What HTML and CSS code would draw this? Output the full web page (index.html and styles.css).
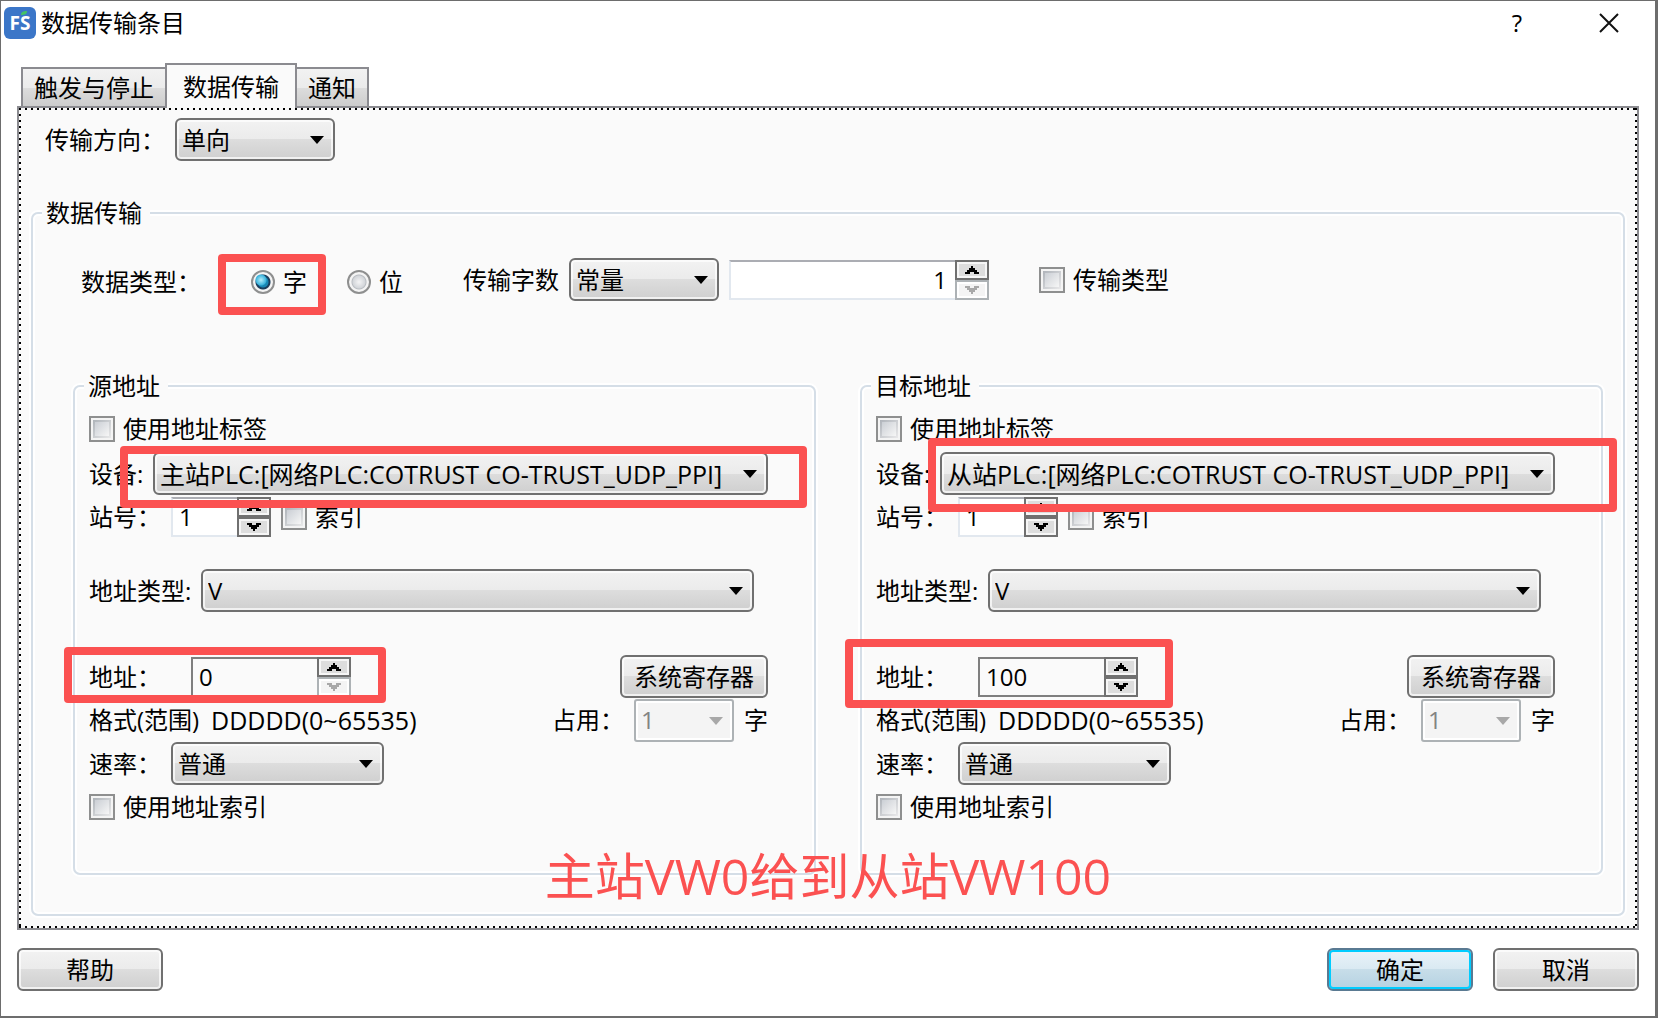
FILE: index.html
```html
<!DOCTYPE html>
<html lang="zh-CN">
<head>
<meta charset="utf-8">
<title>数据传输条目</title>
<link rel="stylesheet" href="styles.css">
</head>
<body>
<svg class="symbols" aria-hidden="true">
  <symbol id="up" viewBox="0 0 14 8"><path d="M6 0h2v2h2v2h2v2h2v2H9V6H5v2H0V6h2V4h2V2h2z"/></symbol>
  <symbol id="down" viewBox="0 0 14 8"><path d="M0 0h5v2h4V0h5v2h-2v2h-2v2H8v2H6V6H4V4H2V2H0z"/></symbol>
</svg>
<div class="window">
  <header class="titlebar">
    <svg class="logo" viewBox="0 0 32 32" aria-hidden="true">
      <rect width="32" height="32" rx="6" fill="#3b76c8"/>
      <text class="logo-text" x="16" y="23" text-anchor="middle">FS</text>
      <path d="M17 8c0-3 2-4 6-4 0 3-2 4-6 4z" fill="#45c463"/>
    </svg>
    <h1 class="title">数据传输条目</h1>
    <button class="caption-button" type="button" aria-label="帮助提示">?</button>
    <button class="caption-button" type="button" aria-label="关闭">
      <svg width="20" height="20" viewBox="0 0 20 20"><path d="M1 1l18 18M19 1L1 19" stroke="#111" stroke-width="2"/></svg>
    </button>
  </header>

  <main class="content">
    <div class="tabs" role="tablist">
      <button class="tab" role="tab" type="button">触发与停止</button>
      <button class="tab tab-active" role="tab" type="button" aria-selected="true">数据传输</button>
      <button class="tab" role="tab" type="button">通知</button>
    </div>

    <form class="panel" id="transfer">
      <div class="direction">
        <label class="direction-label" for="direction">传输方向：</label>
        <span class="combo combo-direction"><select id="direction"><option>单向</option></select></span>
      </div>

      <fieldset class="group">
        <legend>数据传输</legend>
        <div class="group-body">
          <div class="type-row">
            <span class="type-label">数据类型：</span>
            <span class="radios">
              <label class="check"><input type="radio" name="kind" checked>字</label>
              <label class="check"><input type="radio" name="kind">位</label>
              <span class="mark mark-kind"></span>
            </span>
            <span class="count">
              <label for="count-kind">传输字数</label>
              <span class="combo combo-count"><select id="count-kind"><option>常量</option></select></span>
              <span class="spin spin-count">
                <input type="text" value="1" aria-label="字数">
                <span class="steps">
                  <button type="button" aria-label="增加"><svg><use href="#up"/></svg></button>
                  <button type="button" aria-label="减少" disabled><svg><use href="#down"/></svg></button>
                </span>
              </span>
            </span>
            <label class="check"><input type="checkbox">传输类型</label>
          </div>

          <div class="columns">
            <fieldset class="group">
              <legend>源地址</legend>
              <div class="group-body address">
                <div class="row"><label class="check"><input type="checkbox">使用地址标签</label></div>
                <div class="row row-device">
                  <label class="label-device" for="src-device">设备:</label>
                  <span class="combo combo-fill"><select class="wide-text" id="src-device"><option>主站PLC:[网络PLC:COTRUST CO-TRUST_UDP_PPI]</option></select></span>
                </div>
                <div class="row">
                  <label class="label-short" for="src-station">站号：</label>
                  <span class="spin spin-station">
                    <input id="src-station" type="text" value="1">
                    <span class="steps">
                      <button type="button" aria-label="增加"><svg><use href="#up"/></svg></button>
                      <button type="button" aria-label="减少"><svg><use href="#down"/></svg></button>
                    </span>
                  </span>
                  <label class="check"><input type="checkbox">索引</label>
                </div>
                <div class="row row-kind">
                  <label class="label-kind" for="src-kind">地址类型:</label>
                  <span class="combo combo-fill"><select id="src-kind"><option>V</option></select></span>
                </div>
                <div class="row row-address">
                  <label class="label-address" for="src-address">地址：</label>
                  <span class="spin spin-address">
                    <input id="src-address" type="text" value="0">
                    <span class="steps">
                      <button type="button" aria-label="增加"><svg><use href="#up"/></svg></button>
                      <button type="button" aria-label="减少" disabled><svg><use href="#down"/></svg></button>
                    </span>
                  </span>
                  <button class="button button-register" type="button">系统寄存器</button>
                </div>
                <div class="row row-format">
                  <span class="format">格式(范围)</span>
                  <span class="wide-text">DDDDD(0~65535)</span>
                  <span class="usage">
                    <label class="label-usage" for="src-usage">占用：</label>
                    <span class="combo combo-usage"><select id="src-usage" disabled><option>1</option></select></span>
                    <span>字</span>
                  </span>
                </div>
                <div class="row">
                  <label class="label-short" for="src-rate">速率：</label>
                  <span class="combo combo-rate"><select id="src-rate"><option>普通</option></select></span>
                </div>
                <div class="row"><label class="check"><input type="checkbox">使用地址索引</label></div>
                <span class="mark mark-src-device"></span>
                <span class="mark mark-src-address"></span>
              </div>
            </fieldset>

            <fieldset class="group">
              <legend>目标地址</legend>
              <div class="group-body address">
                <div class="row"><label class="check"><input type="checkbox">使用地址标签</label></div>
                <div class="row row-device">
                  <label class="label-device" for="dst-device">设备:</label>
                  <span class="combo combo-fill"><select class="wide-text" id="dst-device"><option>从站PLC:[网络PLC:COTRUST CO-TRUST_UDP_PPI]</option></select></span>
                </div>
                <div class="row">
                  <label class="label-short" for="dst-station">站号：</label>
                  <span class="spin spin-station">
                    <input id="dst-station" type="text" value="1">
                    <span class="steps">
                      <button type="button" aria-label="增加"><svg><use href="#up"/></svg></button>
                      <button type="button" aria-label="减少"><svg><use href="#down"/></svg></button>
                    </span>
                  </span>
                  <label class="check"><input type="checkbox">索引</label>
                </div>
                <div class="row row-kind">
                  <label class="label-kind" for="dst-kind">地址类型:</label>
                  <span class="combo combo-fill"><select id="dst-kind"><option>V</option></select></span>
                </div>
                <div class="row row-address">
                  <label class="label-address" for="dst-address">地址：</label>
                  <span class="spin spin-address">
                    <input id="dst-address" type="text" value="100">
                    <span class="steps">
                      <button type="button" aria-label="增加"><svg><use href="#up"/></svg></button>
                      <button type="button" aria-label="减少"><svg><use href="#down"/></svg></button>
                    </span>
                  </span>
                  <button class="button button-register" type="button">系统寄存器</button>
                </div>
                <div class="row row-format">
                  <span class="format">格式(范围)</span>
                  <span class="wide-text">DDDDD(0~65535)</span>
                  <span class="usage">
                    <label class="label-usage" for="dst-usage">占用：</label>
                    <span class="combo combo-usage"><select id="dst-usage" disabled><option>1</option></select></span>
                    <span>字</span>
                  </span>
                </div>
                <div class="row">
                  <label class="label-short" for="dst-rate">速率：</label>
                  <span class="combo combo-rate"><select id="dst-rate"><option>普通</option></select></span>
                </div>
                <div class="row"><label class="check"><input type="checkbox">使用地址索引</label></div>
                <span class="mark mark-dst-device"></span>
                <span class="mark mark-dst-address"></span>
              </div>
            </fieldset>
          </div>
          <p class="note">主站VW0给到从站VW100</p>
        </div>
      </fieldset>
    </form>

    <footer class="footer">
      <button class="button" type="button">帮助</button>
      <button class="button button-default" type="submit" form="transfer">确定</button>
      <button class="button" type="button">取消</button>
    </footer>
  </main>
</div>
</body>
</html>
```
FILE: styles.css
```css
* { box-sizing: border-box; }

body {
  margin: 0;
  font: 24px/32px "Open Sans", "Noto Sans CJK SC", sans-serif;
  color: #000;
}

button, input, select { margin: 0; font: inherit; color: inherit; }
button { padding: 0; }
.symbols { display: none; }

.window {
  display: flex;
  flex-direction: column;
  min-height: 100vh;
  background: #fff;
  border: solid #6d6d6d;
  border-width: 1px 3px 2px 1px;
}

/* title bar */
.titlebar { display: flex; align-items: center; height: 44px; padding-left: 3px; }
.logo { width: 32px; height: 32px; }
.logo-text { font: 700 19px "Noto Sans", sans-serif; fill: #fff; }
.title { flex: 1; margin: 0; padding-left: 5px; font-size: 24px; font-weight: 400; }
.caption-button {
  display: flex;
  align-items: center;
  justify-content: center;
  width: 92px;
  height: 44px;
  border: 0;
  background: none;
}

.content { display: flex; flex-direction: column; flex: 1; padding: 18px 16px 0; }

/* tabs */
.tabs { display: flex; align-items: flex-end; margin-bottom: -2px; padding-left: 4px; }
.tab {
  height: 41px;
  padding: 0 11px;
  border: 2px solid #8b8b90;
  background: linear-gradient(#f2f2f2, #ebebeb 50%, #ddd 50%, #cdcdcd);
}
.tab-active {
  z-index: 1;
  height: 45px;
  margin: 0 -2px;
  padding: 0 16px;
  border-bottom: 0;
  background: #fafafa;
}

/* page with its focus outline of square dots */
.panel {
  flex: 1;
  padding: 10px 12px 12px;
  border: 2px solid #8b8b90;
  background:
    repeating-linear-gradient(90deg, #000 0 2px, transparent 2px 6px) top / 100% 2px no-repeat,
    repeating-linear-gradient(90deg, #000 0 2px, transparent 2px 6px) bottom / 100% 2px no-repeat,
    repeating-linear-gradient(#000 0 2px, transparent 2px 6px) left / 2px 100% no-repeat,
    repeating-linear-gradient(#000 0 2px, transparent 2px 6px) right / 2px 100% no-repeat,
    #fafafa;
}

.direction { display: flex; align-items: center; padding-left: 14px; }
.direction-label { width: 130px; }

/* group boxes */
.group {
  min-width: 0;
  margin: 0;
  padding: 0;
  border: 2px solid #d5dee7;
  border-radius: 7px;
  box-shadow: 0 0 0 2px #fff, inset 0 0 0 2px #fff;
}
.group legend {
  height: 36px;
  margin-left: 9px;
  padding: 0 8px 0 4px;
  line-height: 36px;
  background: #fafafa;
}
.group-body { position: relative; }
.direction + .group { margin-top: 34px; }

.type-row { display: flex; align-items: center; padding: 27px 0 0 48px; }
.type-label { width: 170px; margin-top: 4px; }
.radios { position: relative; display: flex; gap: 40px; margin: 4px 60px 0 0; }
.count { display: flex; align-items: center; gap: 10px; margin-right: 50px; }
.columns {
  display: grid;
  grid-template-columns: 1fr 1fr;
  gap: 44px;
  padding: 67px 20px 39px 40px;
}

.address { padding: 3px 46px 45px 14px; }
.row { display: flex; align-items: center; height: 43px; }
.row-device { margin-top: 2px; }
.row-kind { margin-top: 31px; padding-right: 14px; }
.row-address { margin-top: 43px; }
.row-format { height: 44px; }
.label-device { width: 64px; }
.label-short { width: 82px; }
.label-kind { width: 112px; }
.label-address { width: 102px; }
.label-usage { width: 82px; }
.format { width: 122px; }
.usage { display: flex; align-items: center; margin-left: auto; }

/* drop-downs */
.combo { position: relative; display: block; height: 43px; }
.combo select {
  appearance: none;
  width: 100%;
  height: 43px;
  padding: 0 28px 0 5px;
  border: 2px solid #707070;
  border-radius: 6px;
  background: linear-gradient(#f2f2f2, #ebebeb 50%, #ddd 50%, #cfcfcf);
  box-shadow: inset 0 0 0 2px rgba(255, 255, 255, .7);
}
.combo::after {
  content: "";
  position: absolute;
  top: 18px;
  right: 11px;
  border: solid transparent;
  border-width: 8px 7px 0;
  border-top-color: #000;
  pointer-events: none;
}
.combo select:disabled {
  border-color: #adb2b5;
  border-radius: 3px;
  background: #f4f4f4;
  box-shadow: inset 0 0 0 2px #fff;
  color: #838383;
  opacity: 1;
}
.combo:has(:disabled)::after { border-top-color: #a8a8a8; }
.combo-direction { width: 160px; }
.combo-count { width: 150px; }
.combo-fill { flex: 1; }
.combo-usage { width: 100px; margin-right: 10px; }
.combo-rate { width: 213px; }
.wide-text { font-size: 25px; }

/* spin boxes */
.spin { display: flex; height: 40px; }
.spin input {
  flex: 1;
  min-width: 0;
  padding: 0 6px;
  border: 2px solid #e2e8ef;
  border-top-color: #abadb3;
  border-right: 0;
  background: #fff;
}
.steps { display: flex; flex-direction: column; width: 34px; }
.steps button {
  display: flex;
  align-items: center;
  justify-content: center;
  height: 20px;
  border: 2px solid #707070;
  background: #ddd;
  box-shadow: inset 0 0 0 2px #f6f6f6;
}
.steps button:disabled {
  border-color: #adb2b5;
  background: #f4f4f4;
  box-shadow: inset 0 0 0 2px #fff;
}
.steps svg { width: 14px; height: 8px; fill: #000; }
.steps button:disabled svg { fill: #a8a8a8; }
.spin-count { width: 260px; }
.spin-count input { padding-right: 8px; text-align: right; }
.spin-station { width: 100px; margin-right: 10px; }
.spin-address { width: 160px; }
.spin-address input { border-color: #7f7f7f; background: none; }

/* tick boxes and radios */
.check { display: flex; align-items: center; gap: 8px; }
.check input { appearance: none; flex: none; }
.check input[type="checkbox"] {
  width: 26px;
  height: 26px;
  border: 2px solid #8e8f8f;
  background:
    linear-gradient(135deg, #cbcfd5, #f6f6f6) center / 14px 14px no-repeat,
    linear-gradient(135deg, #aeb3b9, #e9e9ea) center / 18px 18px no-repeat,
    #f4f4f4;
}
.check input[type="radio"] {
  width: 24px;
  height: 24px;
  border: 2px solid #8e8f8f;
  border-radius: 50%;
  background:
    radial-gradient(circle at center, #f4f4f5 0, #d3d6da 6px, #b9bdc2 7px, #f4f4f4 8px);
}
.check input[type="radio"]:checked {
  background:
    radial-gradient(circle at 8px 8px, #b5ecfa 0, #3db4dc 5px, transparent 6px),
    radial-gradient(circle at center, #1887b4 0 5px, #1b3d5c 6px 7px, #f4f4f4 8px);
}

/* push buttons */
.button {
  width: 146px;
  height: 43px;
  border: 2px solid #707070;
  border-radius: 6px;
  background: linear-gradient(#f2f2f2, #ebebeb 50%, #ddd 50%, #cfcfcf);
  box-shadow: inset 0 0 0 2px rgba(255, 255, 255, .7);
}
.button-register { width: 148px; margin-left: auto; }
.button-default {
  margin-left: auto;
  border-color: #5a7a92;
  background: linear-gradient(#eaf3f9, #d9e9f2 50%, #c7dde9 50%, #b5d2e1);
  box-shadow: inset 0 0 0 2px #0cf;
}
.footer { display: flex; gap: 20px; padding: 18px 0 25px; }

/* red annotations drawn over the form */
.mark {
  position: absolute;
  border: 8px solid #fb5151;
  border-radius: 4px;
  pointer-events: none;
}
.mark-kind { left: -33px; top: -12px; width: 108px; height: 61px; }
.mark-src-device { left: 45px; right: 7px; top: 42px; height: 62px; }
.mark-src-address { left: -11px; top: 243px; width: 322px; height: 56px; }
.mark-dst-device { left: 66px; right: -16px; top: 34px; height: 74px; }
.mark-dst-address { left: -17px; top: 235px; width: 328px; height: 69px; }
.note {
  position: absolute;
  top: 613px;
  left: 0;
  right: 0;
  margin: 0;
  font-size: 50px;
  line-height: 64px;
  text-align: center;
  color: #fb5151;
  pointer-events: none;
}
```
